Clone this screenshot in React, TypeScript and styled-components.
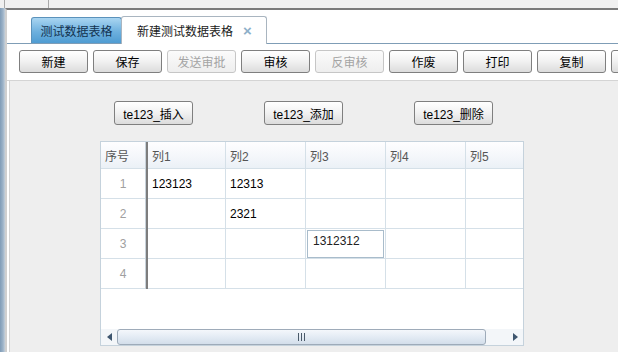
import React from 'react'
import styled, { createGlobalStyle, css } from 'styled-components'

const GlobalStyle = createGlobalStyle`
  html, body {
    margin: 0;
    padding: 0;
    background: #eeeeee;
    font-family: "Liberation Sans", "Noto Sans CJK SC", sans-serif;
    font-size: 12px;
    color: #000;
  }
  * {
    box-sizing: border-box;
  }
`

const Page = styled.div`
  width: 618px;
  height: 352px;
  overflow: hidden;
  display: flex;
  flex-direction: column;
  background: #eeeeee;
`

const TopStrip = styled.div`
  height: 8px;
  display: flex;
  background: #f0f0f0;
  flex-shrink: 0;
`

const StripCell = styled.div<{ $width: number }>`
  width: ${(p) => p.$width}px;
  height: 100%;
  border-right: 1px solid #a8a8a8;
`

const Body = styled.div`
  flex: 1;
  display: flex;
  min-height: 0;
`

const SideStrip = styled.div`
  width: 5px;
  flex-shrink: 0;
  background: linear-gradient(to right, #7f9cb7, #9db3c8 60%, #c3cfda);
`

const Main = styled.div`
  flex: 1;
  min-width: 0;
  display: flex;
  flex-direction: column;
  border-top: 2px solid #7a7a7a;
  border-left: 2px solid #cfcfcf;
  background: #ffffff;
`

const TabBar = styled.div`
  height: 34px;
  flex-shrink: 0;
  display: flex;
  align-items: flex-end;
  padding-left: 24px;
  border-bottom: 1px solid #7f9db6;
`

const Tab = styled.div<{ $active?: boolean }>`
  display: flex;
  align-items: center;
  border-radius: 3px 3px 0 0;
  white-space: nowrap;
  ${(p) =>
    p.$active
      ? css`
          width: 91px;
          height: 26px;
          justify-content: center;
          color: #12324f;
          background: linear-gradient(#a9d5f1, #6db0de 55%, #4f9cd2);
          border: 1px solid #5b92bb;
          border-bottom: none;
        `
      : css`
          width: 146px;
          height: 28px;
          margin-left: -1px;
          margin-bottom: -1px;
          padding-left: 15px;
          gap: 10px;
          color: #1a1a1a;
          background: #ffffff;
          border: 1px solid #a9b5c0;
          border-bottom: none;
        `}
`

const CloseMark = styled.span`
  color: #8db0c9;
  font-size: 15px;
  font-weight: bold;
  line-height: 1;
`

const Toolbar = styled.div`
  height: 37px;
  flex-shrink: 0;
  display: flex;
  gap: 5px;
  padding: 6px 0 0 12px;
  overflow: hidden;
  border-bottom: 1px solid #d4d4d4;
`

const ToolButton = styled.div<{ $disabled?: boolean }>`
  flex-shrink: 0;
  width: 69px;
  height: 23px;
  display: flex;
  align-items: center;
  justify-content: center;
  border-radius: 3px;
  white-space: nowrap;
  ${(p) =>
    p.$disabled
      ? css`
          color: #a4a4a4;
          border: 1px solid #c6c6c6;
          background: linear-gradient(#fbfbfb, #eeeeee);
        `
      : css`
          color: #000;
          border: 1px solid #7f7f7f;
          background: linear-gradient(#ffffff, #f1f1f1 50%, #dcdcdc);
        `}
`

const Panel = styled.div`
  flex: 1;
  margin-left: 2px;
  border-left: 1px solid #d4d4d4;
  background: #eeeeee;
  display: flex;
  flex-direction: column;
  padding-top: 20px;
`

const ActionRow = styled.div`
  display: flex;
  padding-left: 104px;
  gap: 71px;
`

const ActionButton = styled(ToolButton)`
  width: 79px;
  height: 24px;
`

const TableFrame = styled.div`
  margin: 16px 0 0 90px;
  width: 424px;
  height: 205px;
  border: 1px solid #c5d2dc;
  background: #ffffff;
  display: flex;
  flex-direction: column;
  overflow: hidden;
`

const columns = '44px 3px 78px 80px 80px 80px 80px'

const Row = styled.div<{ $header?: boolean }>`
  display: grid;
  grid-template-columns: ${columns};
  flex-shrink: 0;
  height: ${(p) => (p.$header ? 27 : 30)}px;
  ${(p) =>
    p.$header &&
    css`
      background: linear-gradient(#fefeff, #f3f6fa 60%, #eaf0f6);
    `}
`

const Cell = styled.div<{ $header?: boolean }>`
  display: flex;
  align-items: center;
  padding-left: 4px;
  border-right: 1px solid #d5e0e8;
  border-bottom: 1px solid #d5e0e8;
  white-space: nowrap;
  overflow: hidden;
  color: ${(p) => (p.$header ? '#555' : '#000')};
`

const IndexCell = styled(Cell)`
  border-right: none;
  justify-content: ${(p) => (p.$header ? 'flex-start' : 'center')};
  padding-left: ${(p) => (p.$header ? 4 : 0)}px;
  color: ${(p) => (p.$header ? '#555' : '#a0a0a0')};
`

const Divider = styled.div`
  border-left: 1px solid #c8d2da;
  background: #7d7d7d;
`

const EditCell = styled(Cell)`
  padding: 1px 1px 0 1px;
  align-items: stretch;
`

const Editor = styled.div`
  flex: 1;
  border: 1px solid #a9bccb;
  background: #fff;
  padding: 3px 0 0 5px;
  line-height: 14px;
  color: #222;
`

const Filler = styled.div`
  flex: 1;
`

const ScrollBar = styled.div`
  height: 16px;
  flex-shrink: 0;
  display: flex;
  background: #f3f6f9;
`

const ArrowButton = styled.div`
  width: 16px;
  display: flex;
  align-items: center;
  justify-content: center;
`

const Track = styled.div`
  flex: 1;
  display: flex;
  padding-right: 21px;
`

const Thumb = styled.div`
  flex: 1;
  display: flex;
  align-items: center;
  justify-content: center;
  border: 1px solid #9eabb9;
  border-radius: 3px;
  background: linear-gradient(#f4f7fb, #e3ebf4 50%, #d3deea);
`

const Arrow = ({ dir }: { dir: 'left' | 'right' }) => (
  <svg width="5" height="8" viewBox="0 0 5 8">
    <path d={dir === 'left' ? 'M5 0 L0 4 L5 8 Z' : 'M0 0 L5 4 L0 8 Z'} fill="#3e566f" />
  </svg>
)

const Grip = () => (
  <svg width="7" height="8" viewBox="0 0 7 8">
    <rect x="0" y="0" width="1" height="8" fill="#4a5a6a" />
    <rect x="3" y="0" width="1" height="8" fill="#4a5a6a" />
    <rect x="6" y="0" width="1" height="8" fill="#4a5a6a" />
  </svg>
)

// the last button is cut off by the window edge, only its border shows
const toolButtons: { label: string; disabled?: boolean }[] = [
  { label: '新建' },
  { label: '保存' },
  { label: '发送审批', disabled: true },
  { label: '审核' },
  { label: '反审核', disabled: true },
  { label: '作废' },
  { label: '打印' },
  { label: '复制' },
  { label: '' },
]

const headers = ['列1', '列2', '列3', '列4', '列5']

const rows: string[][] = [
  ['123123', '12313', '', '', ''],
  ['', '2321', '', '', ''],
  ['', '', '1312312', '', ''],
  ['', '', '', '', ''],
]

// row 3, column 3 is open for editing
const editing = { row: 2, col: 2 }

export default function App() {
  return (
    <>
      <GlobalStyle />
      <Page>
        <TopStrip>
          <StripCell $width={5} />
          <StripCell $width={44} />
        </TopStrip>
        <Body>
          <SideStrip />
          <Main>
            <TabBar>
              <Tab $active>测试数据表格</Tab>
              <Tab>
                新建测试数据表格
                <CloseMark>×</CloseMark>
              </Tab>
            </TabBar>
            <Toolbar>
              {toolButtons.map((b, i) => (
                <ToolButton key={i} $disabled={b.disabled}>
                  {b.label}
                </ToolButton>
              ))}
            </Toolbar>
            <Panel>
              <ActionRow>
                <ActionButton>te123_插入</ActionButton>
                <ActionButton>te123_添加</ActionButton>
                <ActionButton>te123_删除</ActionButton>
              </ActionRow>
              <TableFrame>
                <Row $header>
                  <IndexCell $header>序号</IndexCell>
                  <Divider />
                  {headers.map((h) => (
                    <Cell key={h} $header>
                      {h}
                    </Cell>
                  ))}
                </Row>
                {rows.map((r, i) => (
                  <Row key={i}>
                    <IndexCell>{i + 1}</IndexCell>
                    <Divider />
                    {r.map((v, j) =>
                      editing.row === i && editing.col === j ? (
                        <EditCell key={j}>
                          <Editor>{v}</Editor>
                        </EditCell>
                      ) : (
                        <Cell key={j}>{v}</Cell>
                      ),
                    )}
                  </Row>
                ))}
                <Filler />
                <ScrollBar>
                  <ArrowButton>
                    <Arrow dir="left" />
                  </ArrowButton>
                  <Track>
                    <Thumb>
                      <Grip />
                    </Thumb>
                  </Track>
                  <ArrowButton>
                    <Arrow dir="right" />
                  </ArrowButton>
                </ScrollBar>
              </TableFrame>
            </Panel>
          </Main>
        </Body>
      </Page>
    </>
  )
}
